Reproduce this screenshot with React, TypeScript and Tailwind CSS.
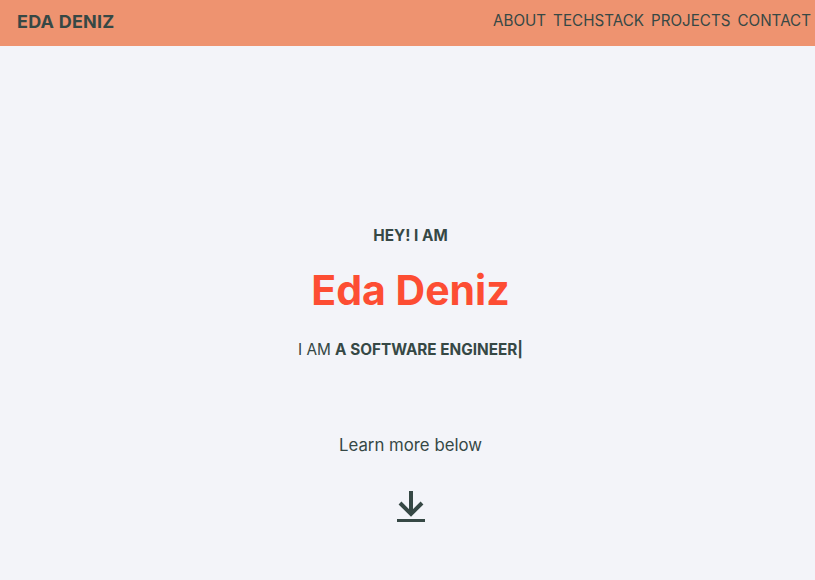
// Portfolio landing hero
const font = { fontFamily: '"Inter", "Liberation Sans", sans-serif' };

function DownloadArrow() {
  return (
    <svg width="32" height="34" viewBox="0 0 32 34" fill="none" stroke="#364845" strokeWidth={4}>
      <path d="M16 2v22" />
      <path d="M5 14l11 11 11-11" strokeLinejoin="miter" />
      <path d="M2 31.5h28" strokeWidth={3} />
    </svg>
  );
}

export default function App() {
  return (
    <div className="min-h-screen w-[815px] h-[580px] bg-[#f3f4f9] text-[#364845] overflow-hidden" style={font}>
      {/* ヘッダー */}
      <header className="h-[46px] bg-[#ee9370] flex items-start justify-between pl-[17px] pr-1 pt-[8px]">
        <span className="text-[18px] font-bold tracking-[0.2px]">EDA DENIZ</span>
        <nav className="flex gap-[7px] text-[15.2px] pt-[2px]">
          <a>ABOUT</a>
          <a>TECHSTACK</a>
          <a>PROJECTS</a>
          <a>CONTACT</a>
        </nav>
      </header>

      {/* ヒーロー */}
      <main className="flex flex-col items-center pt-[180px] pl-[6px]">
        <p className="text-[15.3px] font-bold leading-[20px]">HEY! I AM</p>
        <h1 className="mt-[20px] text-[41px] font-bold leading-[48px] text-[#fd4d33]">Eda Deniz</h1>
        <p className="mt-[26px] text-[15.3px] leading-[20px]">
          I AM <span className="font-bold">A SOFTWARE ENGINEER|</span>
        </p>
        <p className="mt-[75px] text-[16.8px] leading-[20px]">Learn more below</p>
        <div className="mt-[34px]">
          <DownloadArrow />
        </div>
      </main>
    </div>
  );
}
